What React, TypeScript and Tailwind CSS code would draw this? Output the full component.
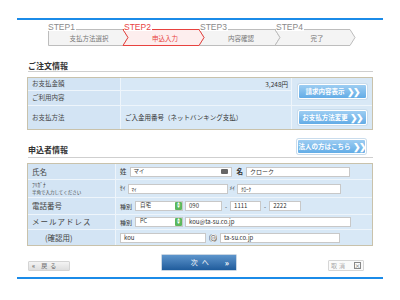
import React from 'react';

const jp = { fontFamily: '"Noto Sans CJK JP", "Noto Sans", sans-serif' };

function BlueBtn({ label, w = 'w-[69px]' }: { label: string; w?: string }) {
  return (
    <div className={`${w} h-[15px] flex items-center justify-center gap-[2px] rounded-[2px] border border-white bg-gradient-to-b from-[#9dcdf2] to-[#62ace6] shadow-[0_0_0_1px_#c9dcec]`}>
      <span className="text-[6.5px] font-bold text-white leading-none">{label}</span>
      <span className="text-[9px] font-black text-white leading-none tracking-[-2px]">❯❯</span>
    </div>
  );
}

function Input({ w, value, small }: { w: string; value?: string; small?: boolean }) {
  return (
    <div className={`${w} h-[10px] bg-white border border-[#c8c8c8] flex items-center px-[3px] ${small ? 'text-[5px]' : 'text-[6px]'} text-[#333] leading-none`}>
      {value}
    </div>
  );
}

function Select({ value }: { value: string }) {
  return (
    <div className="w-[48px] h-[10px] bg-white border border-[#c8c8c8] flex items-center justify-between pl-[4px] text-[5.5px] text-[#333] leading-none">
      <span>{value}</span>
      <span className="w-[7px] h-[8px] bg-[#5cb85c] rounded-[1px] flex flex-col items-center justify-center text-white text-[3px] leading-[3px]">
        <span>▲</span>
        <span>▼</span>
      </span>
    </div>
  );
}

export default function App() {
  const steps = [
    { no: 'STEP1', name: '支払方法選択', active: false },
    { no: 'STEP2', name: '申込入力', active: true },
    { no: 'STEP3', name: '内容確認', active: false },
    { no: 'STEP4', name: '完了', active: false },
  ];

  const label = 'bg-[#d3e4f4] flex items-center px-[4px] text-[6.5px] text-[#444]';
  const cell = 'bg-[#d8e8f6] flex items-center px-[4px] text-[6.5px] text-[#333]';

  return (
    <div className="w-[400px] h-[300px] bg-white flex flex-col pt-[18px] overflow-hidden" style={jp}>
      <div className="mx-[17px] h-[2px] bg-[#1b8be8]" />

      {/* steps */}
      <div className="relative ml-[48px] mt-[4px] w-[310px] h-[23px]">
        <svg className="absolute left-0 top-[5px]" width="310" height="18" viewBox="0 0 310 18">
          <path d="M0.5,0.5 H75 L80,8.5 L75,16.5 H0.5 Z" fill="#f4f4f4" stroke="#bdbdbd" />
          <path d="M151,0.5 H227 L232,8.5 L227,16.5 H151 L156,8.5 Z" fill="#f4f4f4" stroke="#bdbdbd" />
          <path d="M227,0.5 H302 L307,8.5 L302,16.5 H227 L232,8.5 Z" fill="#f4f4f4" stroke="#bdbdbd" />
          <path d="M75,0.5 H151 L156,8.5 L151,16.5 H75 L80,8.5 Z" fill="#fdeeee" stroke="#e8423f" />
        </svg>
        <div className="relative flex">
          {steps.map((s) => (
            <div key={s.no} className="w-[76px] flex flex-col">
              <div className="h-[7px] flex">
                <span className={`bg-white pr-[1px] text-[8.5px] leading-[7px] font-light ${s.active ? 'text-[#e8423f]' : 'text-[#8a8a8a]'}`} style={{ fontFamily: '"Liberation Sans", sans-serif' }}>
                  {s.no}
                </span>
              </div>
              <div className={`h-[16px] flex items-center justify-center pl-[6px] text-[6.5px] ${s.active ? 'text-[#e8423f]' : 'text-[#777]'}`}>
                {s.name}
              </div>
            </div>
          ))}
        </div>
      </div>

      {/* order info */}
      <div className="mx-[28px] w-[345px] mt-[15px] h-[10px] border-b border-[#cfcfcf] text-[8px] font-bold text-[#333] leading-[8px]">
        ご注文情報
      </div>
      <div className="ml-[27px] mt-[5px] w-[346px] grid grid-cols-[92px_170px_1fr] grid-rows-[12px_14px_23px] gap-[1px] bg-[#eef5fb] border border-[#c9c2ab]">
        <div className={label}>お支払金額</div>
        <div className={`${cell} items-start justify-end pt-[2px] pr-[3px]`}>3,248円</div>
        <div className={`${cell} row-span-2 justify-center`}>
          <BlueBtn label="請求内容表示" />
        </div>
        <div className={label}>ご利用内容</div>
        <div className={cell}></div>
        <div className={label}>お支払方法</div>
        <div className={cell}>ご入金用番号（ネットバンキング支払）</div>
        <div className={`${cell} justify-center`}>
          <BlueBtn label="お支払方法変更" />
        </div>
      </div>

      {/* applicant info */}
      <div className="mx-[28px] w-[345px] mt-[10px] h-[18px] border-b border-[#cfcfcf] flex items-end justify-between pb-[2px]">
        <span className="text-[8px] font-bold text-[#333] leading-[8px] mb-[1px]">申込者情報</span>
        <div className="mr-[7px] mb-[1px]">
          <BlueBtn label="法人の方はこちら" />
        </div>
      </div>
      <div className="ml-[27px] mt-[5px] w-[346px] grid grid-cols-[87px_1fr] grid-rows-[15px_17px_16px_14px_15px] gap-[1px] bg-[#eef5fb] border border-[#c9c2ab]">
        <div className={`${label} text-[7.5px]`}>氏名</div>
        <div className={`${cell} gap-[3px]`}>
          <span>姓</span>
          <div className="w-[102px] h-[10px] bg-white border border-[#c8c8c8] flex items-center justify-between px-[3px] text-[5.5px] text-[#333] leading-none">
            <span>マイ</span>
            <span className="w-[7px] h-[5px] bg-[#666] rounded-[1px]" />
          </div>
          <span className="ml-[2px] font-bold">名</span>
          <Input w="w-[104px]" value="クローク" />
        </div>
        <div className={`${label} flex-col items-start justify-center gap-[1px]`}>
          <span className="text-[5.5px] leading-none">ﾌﾘｶﾞﾅ</span>
          <span className="text-[4.5px] leading-none">半角で入力してください</span>
        </div>
        <div className={`${cell} gap-[2px]`}>
          <span className="text-[5.5px]">ｾｲ</span>
          <Input w="w-[100px]" value="ﾏｲ" small />
          <span className="text-[5.5px]">ﾒｲ</span>
          <Input w="w-[104px]" value="ｸﾛｰｸ" small />
        </div>
        <div className={`${label} text-[7.5px]`}>電話番号</div>
        <div className={`${cell} gap-[2px] text-[6px]`}>
          <span className="mr-[1px]">種別</span>
          <Select value="自宅" />
          <Input w="w-[37px]" value="090" />
          <span className="px-[1px]">-</span>
          <Input w="w-[31px]" value="1111" />
          <span className="px-[1px]">-</span>
          <Input w="w-[32px]" value="2222" />
        </div>
        <div className={`${label} text-[7.5px] tracking-[1px]`}>メールアドレス</div>
        <div className={`${cell} gap-[2px] text-[6px]`}>
          <span className="mr-[1px]">種別</span>
          <Select value="PC" />
          <Input w="w-[166px]" value="kou@ta-su.co.jp" />
        </div>
        <div className={`${label} text-[7.5px] pl-[17px]`}>(確認用)</div>
        <div className={`${cell} gap-[3px]`}>
          <Input w="w-[86px]" value="kou" />
          <span className="w-[8px] h-[8px] rounded-full bg-[#8a8a8a] text-white text-[7px] font-bold leading-none flex items-center justify-center">@</span>
          <Input w="w-[120px]" value="ta-su.co.jp" />
        </div>
      </div>

      {/* buttons */}
      <div className="ml-[28px] mt-[8px] w-[336px] h-[17px] flex items-end justify-between">
        <div className="w-[42px] h-[10px] rounded-[1px] border border-[#d4d4d4] bg-gradient-to-b from-[#f4f4f4] to-[#dedede] flex items-center gap-[6px] px-[3px] text-[6px] text-[#666] leading-none">
          <span className="font-bold">«</span>
          <span className="tracking-[3px]">戻る</span>
        </div>
        <div className="w-[76px] h-[17px] rounded-[1px] border border-[#c9d6e3] bg-gradient-to-b from-[#5d95cc] to-[#1f5c9c] flex items-center justify-end gap-[12px] pr-[7px] text-white text-[7px] leading-none">
          <span className="tracking-[4px]">次へ</span>
          <span className="font-bold text-[8px]">»</span>
        </div>
        <div className="w-[36px] h-[11px] rounded-[1px] border border-[#d6d6d6] bg-[#fafafa] flex items-center justify-between px-[2px] text-[6px] text-[#aaa] leading-none">
          <span className="tracking-[2px]">取消</span>
          <span className="w-[7px] h-[7px] border border-[#888] text-[#666] text-[6px] flex items-center justify-center">×</span>
        </div>
      </div>
      <div className="mx-[17px] mt-[6px] h-[2px] bg-[#1b8be8]" />
    </div>
  );
}
